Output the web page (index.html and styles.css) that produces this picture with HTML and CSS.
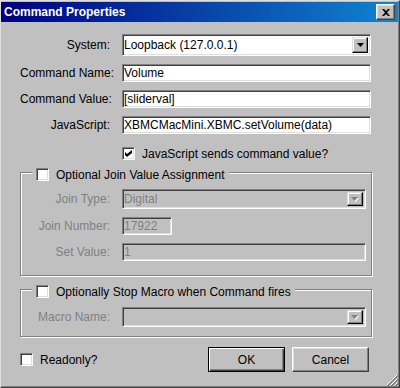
FILE: index.html
```html
<!DOCTYPE html>
<html lang="en">
<head>
    <meta charset="UTF-8">
    <meta name="viewport" content="width=device-width, initial-scale=1.0">
    <title>Command Properties</title>
    <link rel="stylesheet" href="styles.css">
</head>
<body>
    <div class="window">
        <div class="titlebar">
            <span class="title">Command Properties</span>
            <span class="close">
                <svg width="8" height="7" viewBox="0 0 8 7"><path d="M0 0h2l2 2 2-2h2L5 3.5 8 7H6L4 5 2 7H0l3-3.5z" fill="#000"/></svg>
            </span>
        </div>

        <div class="content">
            <div class="form main">
                <div class="lbl">System:</div>
                <div class="field select">
                    <span class="val">Loopback (127.0.0.1)</span>
                    <span class="drop"><svg width="7" height="4" viewBox="0 0 7 4"><path d="M0 0h7L3.5 4z" fill="#000"/></svg></span>
                </div>

                <div class="lbl">Command Name:</div>
                <div class="field">Volume</div>

                <div class="lbl">Command Value:</div>
                <div class="field">[sliderval]</div>

                <div class="lbl">JavaScript:</div>
                <div class="field">XBMCMacMini.XBMC.setVolume(data)</div>
            </div>

            <div class="check-row">
                <span class="cb"><svg width="7" height="7" viewBox="0 0 7 7"><path d="M0 2l2 2 5-4v3L2 7 0 5z" fill="#000"/></svg></span>
                <span>JavaScript sends command value?</span>
            </div>

            <div class="group join">
                <div class="group-title">
                    <span class="cb"></span>
                    <span>Optional Join Value Assignment</span>
                </div>
                <div class="form inner">
                    <div class="lbl">Join Type:</div>
                    <div class="field select off">
                        <span class="val">Digital</span>
                        <span class="drop"><svg width="8" height="5" viewBox="0 0 8 5"><path d="M1 1h7L4.5 5z" fill="#fff"/><path d="M0 0h7L3.5 4z" fill="#808080"/></svg></span>
                    </div>

                    <div class="lbl">Join Number:</div>
                    <div class="field off short">17922</div>

                    <div class="lbl">Set Value:</div>
                    <div class="field off">1</div>
                </div>
            </div>

            <div class="group macro">
                <div class="group-title">
                    <span class="cb"></span>
                    <span>Optionally Stop Macro when Command fires</span>
                </div>
                <div class="form inner">
                    <div class="lbl">Macro Name:</div>
                    <div class="field select off">
                        <span class="val"></span>
                        <span class="drop"><svg width="8" height="5" viewBox="0 0 8 5"><path d="M1 1h7L4.5 5z" fill="#fff"/><path d="M0 0h7L3.5 4z" fill="#808080"/></svg></span>
                    </div>
                </div>
            </div>

            <div class="footer">
                <span class="cb"></span>
                <span class="ro">Readonly?</span>
                <div class="buttons">
                    <button class="btn default">OK</button>
                    <button class="btn">Cancel</button>
                </div>
            </div>
        </div>

        <svg class="grip" width="12" height="12" viewBox="0 0 12 12">
            <path d="M11 1L1 11M11 5L5 11M11 9L9 11" stroke="#fff" stroke-width="1"/>
            <path d="M12 1L1 12M12 2L2 12M12 5L5 12M12 6L6 12M12 9L9 12M12 10L10 12" stroke="#808080" stroke-width="1"/>
        </svg>
    </div>
</body>
</html>
```

FILE: styles.css
```css
* {
    box-sizing: border-box;
}
body {
    margin: 0;
    font-family: "Liberation Sans", Arial, sans-serif;
    font-size: 12px;
    color: #000;
    background-color: #c0c0c0;
}
.window {
    position: relative;
    width: 400px;
    height: 388px;
    padding-top: 1px;
    background-color: #c0c0c0;
    border: 1px solid;
    border-color: #dfdfdf #404040 #404040 #dfdfdf;
    box-shadow: inset -1px -1px #808080;
}
.titlebar {
    display: flex;
    align-items: center;
    height: 20px;
    margin-right: 1px;
    padding: 0 3px;
    background: linear-gradient(to right, #000080, #1084d0);
    color: #fff;
    font-weight: bold;
}
.title {
    flex: 1;
    line-height: 20px;
}
.close {
    display: flex;
    align-items: center;
    justify-content: center;
    width: 19px;
    height: 16px;
    background-color: #c0c0c0;
    border: 1px solid;
    border-color: #fff #404040 #404040 #fff;
    box-shadow: inset -1px -1px #808080, inset 1px 1px #dfdfdf;
}
.content {
    padding: 12px 0 0 19px;
}
.form {
    display: grid;
    column-gap: 12px;
    row-gap: 8px;
    align-items: center;
}
.form.main {
    grid-template-columns: 90px 249px;
}
.form.inner {
    grid-template-columns: 89px 244px;
    margin-top: 8px;
}
.lbl {
    text-align: right;
    white-space: nowrap;
}
.field {
    height: 18px;
    padding: 0 1px;
    line-height: 16px;
    white-space: nowrap;
    overflow: hidden;
    background-color: #fff;
    border: 1px solid;
    border-color: #808080 #fff #fff #808080;
    box-shadow: inset 1px 1px #404040, inset -1px -1px #dfdfdf;
}
.field.short {
    width: 50px;
}
.field.select {
    display: flex;
    align-items: center;
    height: 22px;
    padding: 2px 2px 2px 1px;
}
.form.inner .field.select {
    height: 20px;
}
.val {
    flex: 1;
}
.drop {
    display: flex;
    align-items: center;
    justify-content: center;
    width: 16px;
    height: 100%;
    background-color: #c0c0c0;
    border: 1px solid;
    border-color: #dfdfdf #000 #000 #dfdfdf;
    box-shadow: inset -1px -1px #808080, inset 1px 1px #fff;
}
.off,
.join .lbl,
.macro .lbl {
    color: #808080;
}
.field.off {
    background-color: #c0c0c0;
}
.cb {
    display: flex;
    align-items: center;
    justify-content: center;
    flex: none;
    width: 13px;
    height: 13px;
    background-color: #fff;
    border: 1px solid;
    border-color: #808080 #fff #fff #808080;
    box-shadow: inset 1px 1px #404040, inset -1px -1px #dfdfdf;
}
.check-row {
    display: flex;
    align-items: center;
    gap: 7px;
    height: 13px;
    margin-top: 13px;
    padding-left: 102px;
}
.group {
    width: 352px;
    border: 1px solid #808080;
    box-shadow: inset 1px 1px #fff, 1px 1px #fff;
}
.group.join {
    margin-top: 12px;
    padding-bottom: 14px;
}
.group.macro {
    margin-top: 13px;
    padding-bottom: 9px;
}
.group.macro .form.inner {
    margin-top: 9px;
}
.group-title {
    display: flex;
    align-items: center;
    gap: 7px;
    width: max-content;
    height: 13px;
    margin: -5px 0 0 11px;
    padding: 0 4px;
    background-color: #c0c0c0;
}
.footer {
    display: flex;
    align-items: center;
    gap: 7px;
    width: 352px;
    height: 25px;
    margin-top: 10px;
    padding-right: 3px;
}
.buttons {
    display: flex;
    gap: 7px;
    margin-left: auto;
}
.btn {
    width: 77px;
    height: 25px;
    padding: 0;
    font-family: inherit;
    font-size: 12px;
    color: #000;
    background-color: #c0c0c0;
    border: 1px solid;
    border-color: #fff #404040 #404040 #fff;
    box-shadow: inset -1px -1px #808080, inset 1px 1px #dfdfdf;
}
.btn.default {
    border-color: #000;
    box-shadow: inset 1px 1px #fff, inset -1px -1px #404040, inset -2px -2px #808080;
}
.grip {
    position: absolute;
    right: 1px;
    bottom: 1px;
}
```
